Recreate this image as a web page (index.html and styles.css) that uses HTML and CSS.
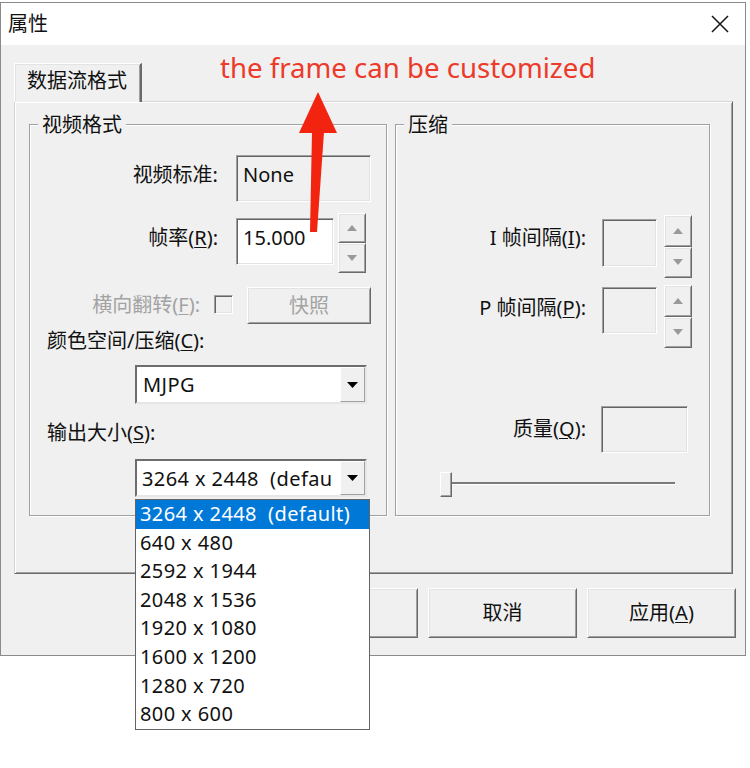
FILE: index.html
```html
<!DOCTYPE html>
<html lang="zh-CN">
<head>
<meta charset="utf-8">
<title>属性</title>
<link rel="stylesheet" href="styles.css">
</head>
<body>
<div class="win">
  <div class="titlebar">
    <span class="title">属性</span>
    <svg class="close" width="18" height="18" viewBox="0 0 18 18"><path d="M1 1L17 17M17 1L1 17" stroke="#1a1a1a" stroke-width="1.6" fill="none"/></svg>
  </div>
  <div class="client">
    <div class="tabs"><div class="tab">数据流格式</div></div>
    <div class="panel">
      <div class="group group-video">
        <div class="legend">视频格式</div>
        <div class="row row-std">
          <span class="label label-wide lm8">视频标准:</span>
          <div class="field field-std">None</div>
        </div>
        <div class="row row-fps">
          <span class="label label-wide lm13">帧率(<u>R</u>):</span>
          <div class="field field-fps">15.000</div>
          <div class="spin spin-fps">
            <span class="spin-btn"><svg width="10" height="6" viewBox="0 0 10 6"><path d="M0 6L5 0L10 6Z" fill="#9a9a9a"/></svg></span>
            <span class="spin-btn"><svg width="10" height="6" viewBox="0 0 10 6"><path d="M0 0L5 6L10 0Z" fill="#9a9a9a"/></svg></span>
          </div>
        </div>
        <div class="row row-flip">
          <span class="label label-flip disabled">横向翻转(<u>F</u>):</span>
          <span class="check"></span>
          <div class="raised btn-snap disabled">快照</div>
        </div>
        <div class="caption">颜色空间/压缩(<u>C</u>):</div>
        <div class="combo combo-color">
          <span class="combo-text">MJPG</span>
          <span class="combo-btn"><svg width="11" height="6" viewBox="0 0 11 6"><path d="M0 0L5.5 6L11 0Z" fill="#000"/></svg></span>
        </div>
        <div class="caption caption-size">输出大小(<u>S</u>):</div>
        <div class="combo combo-size">
          <span class="combo-text">3264 x 2448  (defau</span>
          <span class="combo-btn"><svg width="11" height="6" viewBox="0 0 11 6"><path d="M0 0L5.5 6L11 0Z" fill="#000"/></svg></span>
          <ul class="dropdown">
            <li class="sel">3264 x 2448  (default)</li>
            <li>640 x 480</li>
            <li>2592 x 1944</li>
            <li>2048 x 1536</li>
            <li>1920 x 1080</li>
            <li>1600 x 1200</li>
            <li>1280 x 720</li>
            <li>800 x 600</li>
          </ul>
        </div>
      </div>
      <div class="group group-comp">
        <div class="legend">压缩</div>
        <div class="row row-i">
          <span class="label label-comp">I 帧间隔(<u>I</u>):</span>
          <div class="field field-small fi"></div>
          <div class="spin spin-comp">
            <span class="spin-btn"><svg width="10" height="6" viewBox="0 0 10 6"><path d="M0 6L5 0L10 6Z" fill="#9a9a9a"/></svg></span>
            <span class="spin-btn"><svg width="10" height="6" viewBox="0 0 10 6"><path d="M0 0L5 6L10 0Z" fill="#9a9a9a"/></svg></span>
          </div>
        </div>
        <div class="row row-p">
          <span class="label label-comp">P 帧间隔(<u>P</u>):</span>
          <div class="field field-small fp"></div>
          <div class="spin spin-comp">
            <span class="spin-btn"><svg width="10" height="6" viewBox="0 0 10 6"><path d="M0 6L5 0L10 6Z" fill="#9a9a9a"/></svg></span>
            <span class="spin-btn"><svg width="10" height="6" viewBox="0 0 10 6"><path d="M0 0L5 6L10 0Z" fill="#9a9a9a"/></svg></span>
          </div>
        </div>
        <div class="row row-q">
          <span class="label label-comp">质量(<u>Q</u>):</span>
          <div class="field field-q"></div>
        </div>
        <div class="slider">
          <span class="thumb"></span>
          <span class="track"></span>
        </div>
      </div>
    </div>
    <div class="buttons">
      <div class="raised btn-dlg">确定</div>
      <div class="raised btn-dlg">取消</div>
      <div class="raised btn-dlg">应用(<u>A</u>)</div>
    </div>
  </div>
  <div class="note">the frame can be customized</div>
  <svg class="arrow" width="45" height="148" viewBox="0 0 45 148">
    <path d="M23 4L42 45L4 45Z" fill="#f2230f"/>
    <path d="M17 44L29 44L22 144L15 144Z" fill="#f2230f"/>
  </svg>
</div>
</body>
</html>
```

FILE: styles.css
```css
* { box-sizing: border-box; }
html, body { margin: 0; padding: 0; background: #fff; }
body {
  font-family: "Noto Sans", "Noto Sans CJK SC", sans-serif;
  font-size: 20px;
  color: #111;
  width: 750px;
  height: 768px;
  overflow: hidden;
}
u { text-decoration: underline; text-underline-offset: 2px; text-decoration-thickness: 1px; }

.win {
  position: relative;
  margin-top: 2px;
  width: 746px;
  height: 654px;
  border: 1px solid #8a8a8a;
  display: flex;
  flex-direction: column;
}
.titlebar {
  flex: none;
  height: 42px;
  background: #fff;
  display: flex;
  align-items: center;
  justify-content: space-between;
  padding: 0 16px 0 7px;
}
.title { line-height: 24px; }
.close { display: block; }

.client {
  flex: 1;
  background: #f0f0f0;
  padding: 18px 9px 0 13px;
  display: flex;
  flex-direction: column;
}
.tabs { display: flex; height: 38px; position: relative; z-index: 2; }
.tab {
  width: 128px;
  height: 39px;
  background: #f0f0f0;
  border-top: 1px solid #fff;
  border-left: 1px solid #fff;
  border-right: 2px solid #6a6a6a;
  box-shadow: inset 1px 1px 0 #e3e3e3, inset -1px 0 0 #a0a0a0;
  display: flex;
  align-items: center;
  padding: 0 0 4px 12px;
  line-height: 24px;
}
.panel {
  width: 719px;
  height: 473px;
  border: 1px solid;
  border-color: #d6d6d6 #6a6a6a #6a6a6a #d6d6d6;
  box-shadow: inset 1px 1px 0 #fff, inset -1px -1px 0 #a0a0a0;
  padding: 22px 0 0 14px;
  display: flex;
  align-items: flex-start;
  gap: 8px;
}
.group {
  height: 392px;
  border: 1px solid #a0a0a0;
  box-shadow: inset 1px 1px 0 #fff, 1px 1px 0 #fff;
  display: flex;
  flex-direction: column;
  align-items: flex-start;
}
.group-video { width: 358px; }
.group-comp { width: 315px; }
.legend {
  position: relative;
  margin: -12px 0 0 8px;
  padding: 0 4px;
  background: #f0f0f0;
  line-height: 24px;
}
.row { display: flex; align-items: flex-start; flex: none; }
.label { flex: none; text-align: right; line-height: 24px; white-space: nowrap; }
.label-wide { width: 188px; }
.lm8 { margin-top: 8px; }
.lm13 { margin-top: 13px; }
.disabled { color: #a3a3a3; }

.field {
  flex: none;
  border: 1px solid;
  border-color: #a0a0a0 #fff #fff #a0a0a0;
  box-shadow: inset 1px 1px 0 #646464, inset -1px -1px 0 #e3e3e3;
  background: #f0f0f0;
  padding: 7px 0 0 6px;
  line-height: 24px;
}
.raised {
  border: 1px solid;
  border-color: #fff #6a6a6a #6a6a6a #fff;
  box-shadow: inset 1px 1px 0 #e3e3e3, inset -1px -1px 0 #a0a0a0;
  background: #f0f0f0;
}

.row-std { margin-top: 18px; height: 47px; }
.field-std { margin-left: 18px; width: 135px; height: 47px; }

.row-fps { margin-top: 11px; height: 60px; }
.field-fps { margin: 5px 0 0 18px; width: 98px; height: 47px; background: #fff; }
.spin { flex: none; width: 28px; display: flex; flex-direction: column; }
.spin-fps { margin-left: 4px; height: 60px; }
.spin-btn {
  flex: 1;
  display: flex;
  align-items: center;
  justify-content: center;
  border: 1px solid;
  border-color: #fff #6a6a6a #6a6a6a #fff;
  box-shadow: inset 1px 1px 0 #e3e3e3, inset -1px -1px 0 #a0a0a0;
  background: #f0f0f0;
}
.spin-btn svg { display: block; }

.row-flip { margin-top: 14px; height: 37px; }
.label-flip { width: 170px; margin-top: 6px; }
.check {
  flex: none;
  margin: 8px 0 0 14px;
  width: 19px;
  height: 19px;
  border: 1px solid;
  border-color: #a0a0a0 #fff #fff #a0a0a0;
  box-shadow: inset 1px 1px 0 #646464, inset -1px -1px 0 #e3e3e3;
  background: #f0f0f0;
}
.btn-snap {
  flex: none;
  margin-left: 14px;
  width: 124px;
  height: 37px;
  display: flex;
  align-items: center;
  justify-content: center;
  line-height: 24px;
}

.caption { margin: 5px 0 0 17px; line-height: 24px; }
.caption-size { margin-top: 17px; }

.combo {
  position: relative;
  flex: none;
  margin: 12px 0 0 105px;
  width: 232px;
  height: 39px;
  display: flex;
  border: 2px solid;
  border-color: #6d6d6d #e6e6e6 #e6e6e6 #6d6d6d;
  background: #fff;
}
.combo-size { margin-top: 14px; height: 38px; }
.combo-text {
  flex: 1;
  min-width: 0;
  overflow: hidden;
  white-space: pre;
  padding-left: 5px;
  line-height: 35px;
  letter-spacing: 0.4px;
}
.combo-color .combo-text { padding-left: 6px; }
.combo-btn {
  flex: none;
  width: 25px;
  display: flex;
  align-items: center;
  justify-content: center;
  border: 1px solid;
  border-color: #fff #a0a0a0 #a0a0a0 #fff;
  background: #f0f0f0;
}
.combo-btn svg { display: block; }

.dropdown {
  position: absolute;
  top: calc(100% + 4px);
  left: -2px;
  width: 235px;
  margin: 0;
  padding: 0;
  list-style: none;
  background: #fff;
  border: 1px solid #646464;
  z-index: 5;
}
.dropdown li {
  height: 28.6px;
  line-height: 28.6px;
  padding-left: 4px;
  white-space: pre;
  letter-spacing: 0.4px;
  color: #111;
}
.dropdown li.sel { background: #0078d7; color: #fff; }

.label-comp { width: 190px; margin-top: 11px; }
.row-i { margin-top: 78px; height: 63px; }
.row-p { margin-top: 7px; height: 63px; }
.field-small { margin-left: 16px; width: 55px; height: 48px; }
.fi { margin-top: 4px; }
.fp { margin-top: 2px; height: 47px; }
.spin-comp { margin-left: 7px; height: 63px; }
.row-q { margin-top: 58px; height: 47px; }
.field-q { margin-left: 15px; width: 87px; height: 47px; }

.slider {
  margin: 19px 0 0 44px;
  height: 25px;
  display: flex;
  align-items: center;
}
.thumb {
  flex: none;
  width: 12px;
  height: 25px;
  border: 1px solid;
  border-color: #fff #6a6a6a #6a6a6a #fff;
  box-shadow: inset -1px -1px 0 #a0a0a0;
  background: #f0f0f0;
}
.track {
  flex: none;
  width: 223px;
  height: 3px;
  margin-top: -3px;
  border-top: 2px solid #7a7a7a;
  border-bottom: 1px solid #fff;
}

.buttons {
  display: flex;
  justify-content: flex-end;
  gap: 10px;
  margin-top: 14px;
}
.btn-dlg {
  width: 149px;
  height: 50px;
  display: flex;
  align-items: center;
  justify-content: center;
  line-height: 24px;
}

.note {
  position: absolute;
  left: 219px;
  top: 47px;
  font-family: "Noto Sans", sans-serif;
  font-size: 27.6px;
  line-height: 34px;
  color: #ec3a2b;
  white-space: nowrap;
  z-index: 6;
}
.arrow {
  position: absolute;
  left: 294px;
  top: 85px;
  z-index: 6;
}
```
